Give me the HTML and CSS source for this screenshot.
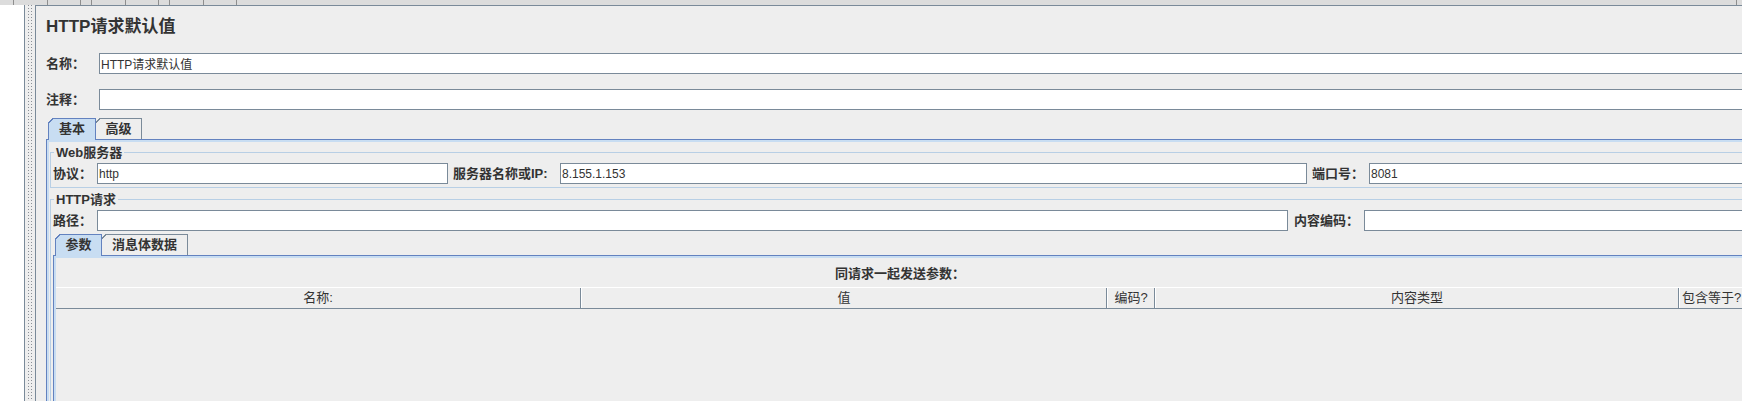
FILE: index.html
```html
<!DOCTYPE html>
<html>
<head>
<meta charset="utf-8">
<title>HTTP请求默认值</title>
<link rel="stylesheet" href="styles.css">
</head>
<body>
<div class="page">
  <div class="topbar">
    <span class="tb w14"></span><span class="tb w34"></span><span class="tb w33"></span>
    <span class="tb w11"></span><span class="tb w34"></span><span class="tb w33"></span>
    <span class="tb w11"></span><span class="tb w34"></span><span class="tb w33"></span>
    <span class="tb-end"></span>
  </div>

  <div class="main">
    <div class="tree"></div>
    <div class="splitter"><div class="grip"></div></div>

    <div class="editor">
      <div class="title">HTTP请求默认值</div>

      <div class="field-row name-row">
        <span class="lbl lbl-name">名称：</span>
        <input class="txt grow" value="HTTP请求默认值">
      </div>
      <div class="field-row comment-row">
        <span class="lbl lbl-name">注释：</span>
        <input class="txt grow" value="">
      </div>

      <div class="tabs">
        <span class="tab selected t-basic">基本</span>
        <span class="tab t-adv">高级</span>
      </div>
      <div class="tab-panel">
        <fieldset class="group web">
          <legend>Web服务器</legend>
          <div class="field-row">
            <span class="lbl lbl-short">协议：</span>
            <input class="txt w-protocol" value="http">
            <span class="lbl lbl-host">服务器名称或IP:</span>
            <input class="txt w-host" value="8.155.1.153">
            <span class="lbl lbl-port">端口号：</span>
            <input class="txt grow" value="8081">
          </div>
        </fieldset>

        <fieldset class="group http">
          <legend>HTTP请求</legend>
          <div class="field-row">
            <span class="lbl lbl-short">路径：</span>
            <input class="txt w-path" value="">
            <span class="lbl lbl-enc">内容编码：</span>
            <input class="txt grow" value="">
          </div>

          <div class="tabs inner-tabs">
            <span class="tab selected t-params">参数</span>
            <span class="tab t-body">消息体数据</span>
          </div>
          <div class="tab-panel inner-panel">
            <div class="caption">同请求一起发送参数：</div>
            <div class="table-head">
              <div class="th">名称:</div>
              <div class="th">值</div>
              <div class="th">编码?</div>
              <div class="th">内容类型</div>
              <div class="th">包含等于?</div>
            </div>
          </div>
        </fieldset>
      </div>
    </div>
  </div>
</div>
</body>
</html>
```

FILE: styles.css
```css
html, body {
    margin: 0;
    overflow: hidden;
    background-color: #eeeeee;
}
body {
    font-family: "Liberation Sans", "Noto Sans CJK SC", sans-serif;
    font-size: 13px;
    color: #333333;
}
.page {
    width: 1764px;
    height: 401px;
}

/* toolbar remains at the very top */
.topbar {
    display: flex;
    height: 5px;
    background-color: #dcdcdc;
}
.tb {
    box-sizing: border-box;
    border-right: 1px solid #8e8e8e;
}
.w11 { width: 11px; }
.w14 { width: 14px; }
.w33 { width: 33px; }
.w34 { width: 34px; }
.tb-end {
    margin-left: auto;
    width: 27px;
    border-left: 1px solid #8e8e8e;
}

.main {
    display: flex;
    height: 396px;
}
.tree {
    box-sizing: border-box;
    width: 25px;
    background-color: #ffffff;
    border-right: 1px solid #7a8a99;
}
.splitter {
    width: 10px;
    padding-left: 3px;
    box-sizing: border-box;
}
.grip {
    width: 6px;
    height: 100%;
    background-image: radial-gradient(circle at 0.5px 0.5px, #8a8f96 0.7px, transparent 0.9px);
    background-size: 3px 3px;
}
.editor {
    flex: 1;
    border-left: 1px solid #7a8a99;
    border-top: 1px solid #7a8a99;
    padding: 9px 10px 0 10px;
    overflow: hidden;
}

.title {
    font-size: 17px;
    font-weight: bold;
    line-height: 24px;
    height: 24px;
}

.field-row {
    display: flex;
    align-items: center;
    height: 21px;
}
.name-row { margin-top: 14px; }
.comment-row { margin-top: 15px; }

.lbl {
    font-weight: bold;
    white-space: nowrap;
    line-height: 21px;
}
.lbl-name { width: 53px; }
.lbl-short { width: 44px; }
.lbl-host { width: 107px; margin-left: 5px; }
.lbl-port { width: 57px; margin-left: 5px; }
.lbl-enc { width: 70px; margin-left: 6px; }

.txt {
    box-sizing: border-box;
    height: 21px;
    margin: 0;
    padding: 0 0 0 1px;
    border: 1px solid #7a8a99;
    background-color: #ffffff;
    font-family: "Liberation Sans", "Noto Sans CJK SC", sans-serif;
    font-size: 12px;
    color: #333333;
    outline: none;
}
.grow { flex: 1; min-width: 0; }
.w-protocol { width: 351px; }
.w-host { width: 747px; }
.w-path { width: 1191px; }

/* tabs */
.tabs {
    display: flex;
    height: 21px;
    margin-top: 8px;
    padding-left: 2px;
}
.tab {
    position: relative;
    box-sizing: border-box;
    height: 21px;
    border: 1px solid #7a8a99;
    border-bottom: none;
    font-weight: bold;
    line-height: 20px;
    text-align: center;
    background-color: #eeeeee;
}
.tab::before {
    content: "";
    position: absolute;
    top: -1px;
    left: -1px;
    width: 7px;
    height: 7px;
    background: linear-gradient(135deg, #eeeeee 0 3.4px, #7a8a99 3.4px 4.5px, transparent 4.5px);
}
.tab.selected {
    height: 22px;
    margin-bottom: -1px;
    z-index: 1;
    border-color: #6382bf;
    background-color: #c8ddf2;
}
.tab.selected::before {
    background: linear-gradient(135deg, #eeeeee 0 3.4px, #6382bf 3.4px 4.5px, transparent 4.5px);
}
.tab + .tab { border-left: none; }
.t-basic { width: 48px; }
.t-adv { width: 46px; }
.t-params { width: 47px; }
.t-body { width: 86px; }

.tab-panel {
    border-top: 1px solid #6382bf;
    border-left: 1px solid #6382bf;
    border-right: 1px solid #6382bf;
    box-shadow: inset 0 0 0 2px #c8ddf2;
    padding: 2px 3px 0 3px;
    min-height: 300px;
}

/* titled groups */
.group {
    margin: 0;
    min-width: 0;
    border: 1px solid #b8cfe5;
    padding: 2px 2px 3px 2px;
}
.group legend {
    margin-left: 1px;
    padding: 0 2px;
    font-weight: bold;
    line-height: 17px;
}
.web { margin-top: 2px; }
.http {
    margin-top: 3px;
    padding-bottom: 0;
}

.inner-tabs { margin-top: 3px; }
.inner-panel {
    padding: 2px 2px 0 2px;
    min-height: 200px;
}

.caption {
    padding-top: 3px;
    height: 26px;
    line-height: 26px;
    text-align: center;
    font-weight: bold;
}

.table-head {
    display: grid;
    grid-template-columns: 525px 526px 48px 524px 1fr;
    box-sizing: border-box;
    height: 22px;
    border-top: 1px solid #ffffff;
    border-bottom: 1px solid #7a8a99;
}
.th {
    border-left: 1px solid #ffffff;
    border-right: 1px solid #7a8a99;
    text-align: center;
    line-height: 20px;
    white-space: nowrap;
    overflow: hidden;
}
.th:first-child { border-left: none; }
```
